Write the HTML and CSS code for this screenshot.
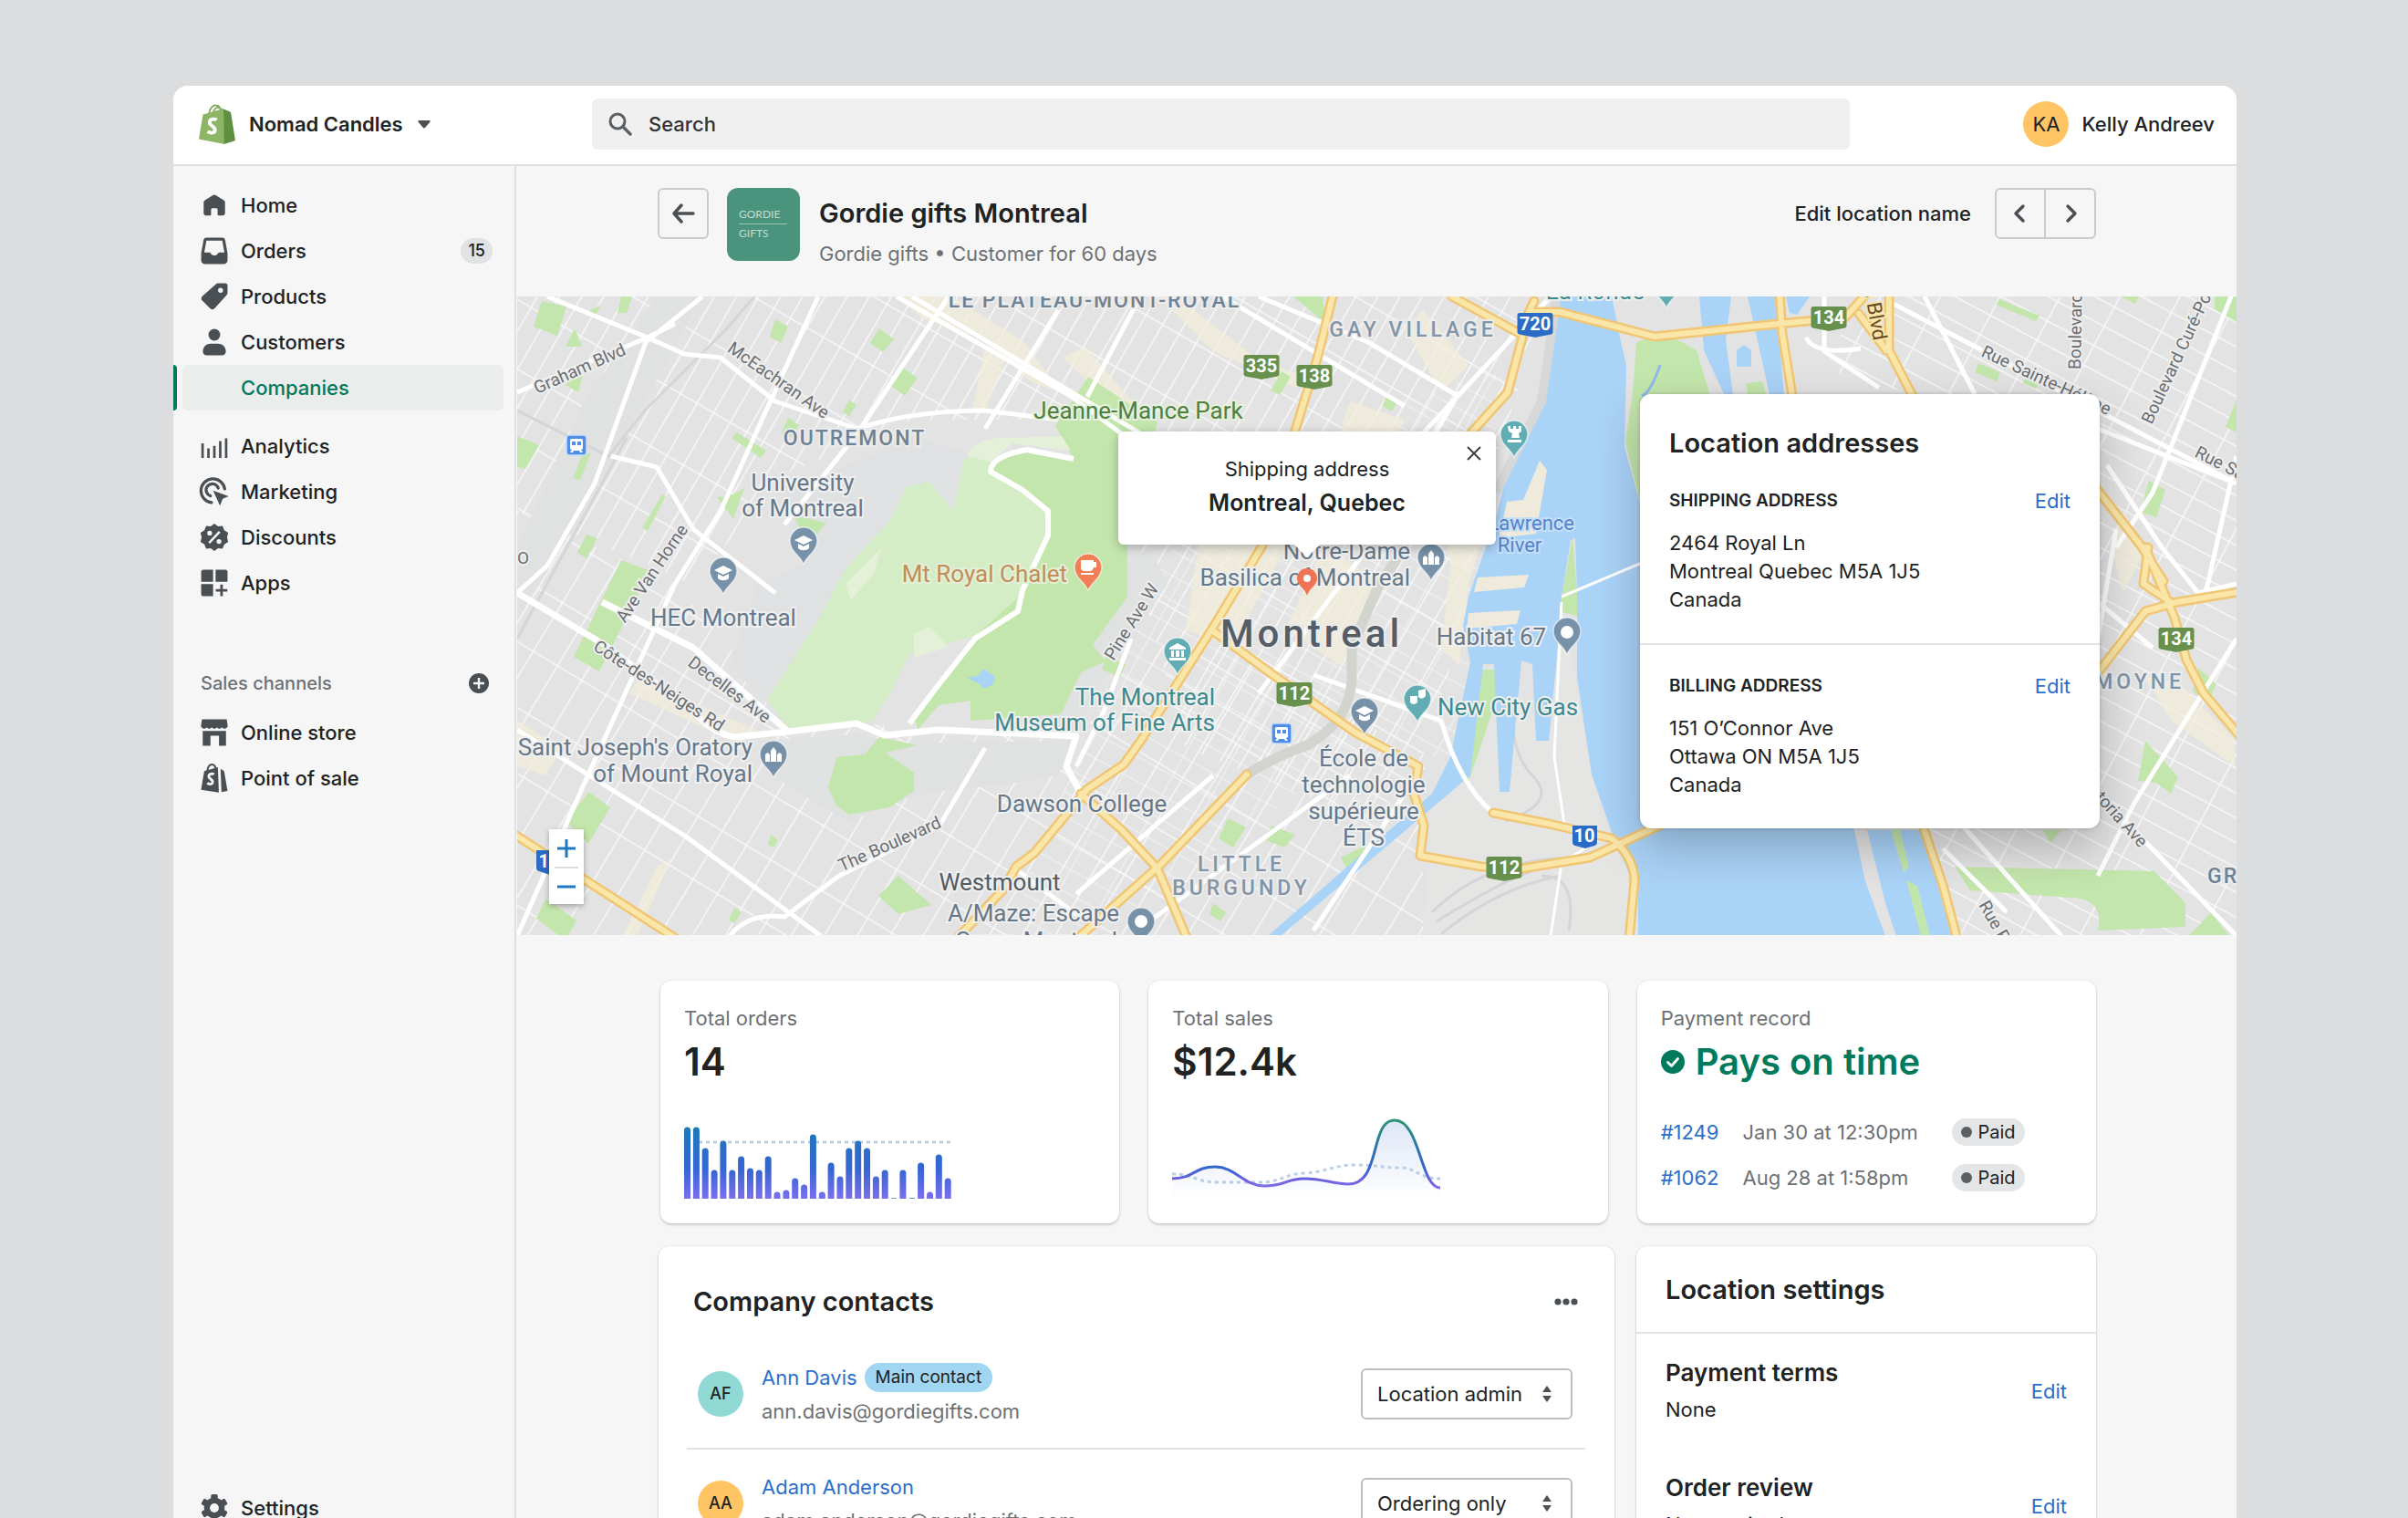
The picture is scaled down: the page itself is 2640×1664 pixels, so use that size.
FILE: index.html
```html
<!DOCTYPE html>
<html lang="en">
<head>
<meta charset="utf-8">
<meta name="viewport" content="width=device-width, initial-scale=1">
<title>Gordie gifts Montreal</title>
<link rel="stylesheet" href="styles.css">
</head>
<body>
<div class="app">
  <header class="topbar">
    <button class="store" type="button">
      <svg class="store-logo" viewBox="0 0 40 44" aria-hidden="true">
        <path d="M11 11C12 4 16 1 19 1.500c4 .5 5 5 5 8M16 10c0-4 3-7 6-6s4 3 4 6" fill="none" stroke="#7fa85a" stroke-width="1.800"/>
        <path d="M4.500 11.500 27 5l1 39L0 38.500z" fill="#8db566"/>
        <path d="M27 5.500 33 8l2 1 5 31-12.500 4z" fill="#5f8f41"/>
        <path d="M19.500 17.500c-1.500-1.200-7.500-1.800-7.800 2.700-.2 4 6.300 4 6 8.300-.3 4-5.500 3.600-8 1.500" fill="none" stroke="#fff" stroke-width="3.800"/>
      </svg>
      <span>Nomad Candles</span>
      <svg class="caret" viewBox="0 0 12 8" aria-hidden="true"><path d="M1 0h10a1 1 0 0 1 .7 1.500L6.700 7.300a1 1 0 0 1-1.400 0L.3 1.500A1 1 0 0 1 1 0z" fill="#4a4f53"/></svg>
    </button>
    <label class="search">
      <svg class="search-icon" viewBox="0 0 26 26" aria-hidden="true"><circle cx="10" cy="10" r="8" fill="none" stroke="#5c5f62" stroke-width="3"/><path d="m16 16 8 8" stroke="#5c5f62" stroke-width="3.400" stroke-linecap="round"/></svg>
      <input type="search" placeholder="Search" aria-label="Search">
    </label>
    <button class="user" type="button"><span class="avatar avatar-sun">KA</span><span>Kelly Andreev</span></button>
  </header>

  <div class="body">
    <nav class="sidebar" aria-label="Main">
      <ul class="nav">
        <li><a href="#home"><svg class="icon" viewBox="0 0 20 20"><path d="M10 3.300c.3 0 .6.1.9.3l5.200 3.200c.5.3.8.8.8 1.400v6.900c0 .9-.7 1.500-1.500 1.500h-2.600c-.4 0-.7-.3-.7-.7v-3c0-.6-.4-1-1-1H8.900c-.6 0-1 .4-1 1v3c0 .4-.3.7-.7.7H4.600c-.9 0-1.500-.7-1.500-1.500V8.200c0-.6.3-1.100.8-1.400l5.200-3.200c.3-.2.6-.3.900-.3z"/></svg>Home</a></li>
        <li><a href="#orders"><svg class="icon" viewBox="0 0 20 20"><path fill-rule="evenodd" d="M5 1.500h10a2 2 0 0 1 2 1.700l1.500 8.300V16a2.500 2.500 0 0 1-2.500 2.500H4A2.500 2.500 0 0 1 1.500 16v-4.500L3 3.200a2 2 0 0 1 2-1.700zM4.900 3.400 3.500 11h3c.6 0 1 .3 1.300.8.5.8 1.300 1.200 2.200 1.200s1.700-.4 2.200-1.200c.3-.5.7-.8 1.300-.8h3l-1.400-7.600z"/></svg>Orders<span class="count">15</span></a></li>
        <li><a href="#products"><svg class="icon" viewBox="0 0 20 20"><path fill-rule="evenodd" d="M11 2c.4-.4.900-.5 1.400-.5H17c.9 0 1.500.7 1.500 1.500v4.700c0 .5-.2 1-.6 1.400l-7.700 8.600c-.7.800-2 .8-2.800.1l-5.200-5.200c-.8-.8-.8-2 0-2.800zM14 4.400a1.600 1.600 0 1 0 0 3.200 1.600 1.600 0 0 0 0-3.200z"/></svg>Products</a></li>
        <li><a href="#customers"><svg class="icon" viewBox="0 0 20 20"><circle cx="10" cy="5.300" r="3.800"/><path d="M2.600 16c0-3 2.400-5 5-5h4.800c2.600 0 5 2 5 5 0 1.400-1 2.500-2.400 2.500H5c-1.400 0-2.400-1.100-2.400-2.500z"/></svg>Customers</a></li>
        <li><a class="current" href="#companies" aria-current="page">Companies</a></li>
      </ul>
      <ul class="nav">
        <li><a href="#analytics"><svg class="icon" viewBox="0 0 20 20"><path d="M1.600 8.300h1.600v9.400H1.600zM5.400 11.500H7v6.200H5.400zM9.200 9.800h1.600v7.900H9.200zM13 6.800h1.600v10.900H13zM16.800 5h1.600v12.700h-1.600z"/></svg>Analytics</a></li>
        <li><a href="#marketing"><svg class="icon" viewBox="0 0 20 20"><g fill="none" stroke="#4a4f53" stroke-width="1.900" stroke-linecap="round"><path d="M8.200 17A7.700 7.700 0 1 1 16.700 8.200"/><path d="M7.500 12.700a4 4 0 1 1 5-5"/></g><path d="m9.200 9.300 10 3.700-3.800 1.600L13.600 19z"/></svg>Marketing</a></li>
        <li><a href="#discounts"><svg class="icon" viewBox="0 0 20 20"><path d="m10 1.200 2.400 1.700 2.900-.2 1.100 2.700 2.500 1.600L18.200 10l.7 3-2.500 1.600-1.100 2.700-2.900-.2L10 18.800l-2.400-1.700-2.900.2-1.100-2.700L1.100 13l.7-3-.7-3 2.500-1.600 1.100-2.700 2.900.2z"/><g stroke="#f6f6f7" stroke-width="1.500" fill="none"><path d="m6.600 13.600 6.800-7.200"/><circle cx="7" cy="7.300" r=".8"/><circle cx="13" cy="12.700" r=".8"/></g></svg>Discounts</a></li>
        <li><a href="#apps"><svg class="icon" viewBox="0 0 20 20"><path d="M3 1.500h6.200v7.700H1.500V3A1.500 1.500 0 0 1 3 1.500zM10.800 1.500H17A1.500 1.500 0 0 1 18.500 3v6.200h-7.700zM1.500 10.800h7.700v7.700H3A1.500 1.500 0 0 1 1.500 17zM13.800 11h1.700v2.900h2.900v1.700h-2.900v2.900h-1.700v-2.900h-2.900v-1.700h2.900z"/></svg>Apps</a></li>
      </ul>
      <div class="nav-title">
        <h2>Sales channels</h2>
        <button class="plain" type="button" aria-label="Add sales channel"><svg class="add-icon" viewBox="0 0 22 22"><circle cx="11" cy="11" r="11" fill="#4a4f53"/><path d="M11 5v12M5 11h12" stroke="#f6f6f7" stroke-width="2.400"/></svg></button>
      </div>
      <ul class="nav">
        <li><a href="#store"><svg class="icon" viewBox="0 0 20 20"><path d="M2 1.500h16l.6 4.300c0 1-1 1.700-1.900 1.700-.8 0-1.400-.4-1.700-.9-.3.500-1 .9-1.700.9s-1.300-.4-1.600-.9c-.3.500-1 .9-1.700.9s-1.400-.4-1.700-.9c-.3.500-.9.900-1.600.9S5.300 7.100 5 6.600c-.3.500-.9.900-1.700.9-.9 0-1.900-.7-1.900-1.700z"/><path d="M2.500 9h15v9.500H13V12H7.500v6.500h-5z"/></svg>Online store</a></li>
        <li><a href="#pos"><svg class="icon" viewBox="0 0 20 20"><path d="M3.500 5.500 12.300 3l.6 16.300L1.400 17.500z"/><path d="M5.500 5.500C5.800 2.800 7 1.200 8.500 1.200S11 3 11 4.500" fill="none" stroke="#4a4f53" stroke-width="1.200"/><path d="m14 4 2.300 1.500 2.200 12.700-3.900.8z"/><path d="M9.800 7.600c-.8-.6-3.300-.7-3.400 1.200-.1 1.800 2.600 1.800 2.500 3.700-.1 1.800-2.400 1.600-3.500.7" fill="none" stroke="#f6f6f7" stroke-width="1.700"/></svg>Point of sale</a></li>
      </ul>
      <ul class="nav nav-bottom">
        <li><a href="#settings"><svg class="icon" viewBox="0 0 20 20"><g><rect x="7.800" y="1.200" width="4.400" height="17.600" rx="1"/><rect x="7.800" y="1.200" width="4.400" height="17.600" rx="1" transform="rotate(60 10 10)"/><rect x="7.800" y="1.200" width="4.400" height="17.600" rx="1" transform="rotate(120 10 10)"/><circle cx="10" cy="10" r="6.600"/></g><circle cx="10" cy="10" r="2.900" fill="#f6f6f7"/></svg>Settings</a></li>
      </ul>
    </nav>

    <main class="main">
      <div class="page-head">
        <button class="icon-button" type="button" aria-label="Back"><svg viewBox="0 0 26 22"><path d="M11 2 3 11l8 9M3 11h21" fill="none" stroke="#4a4f53" stroke-width="3.400" stroke-linecap="round" stroke-linejoin="round"/></svg></button>
        <div class="brand"><span>GORDIE</span><span>GIFTS</span></div>
        <div class="page-title">
          <h1>Gordie gifts Montreal</h1>
          <p>Gordie gifts • Customer for 60 days</p>
        </div>
        <button class="plain edit-name" type="button">Edit location name</button>
        <div class="pager">
          <button class="icon-button" type="button" aria-label="Previous"><svg viewBox="0 0 26 22"><path d="m16 3-8 8 8 8" fill="none" stroke="#4a4f53" stroke-width="3.400" stroke-linecap="round" stroke-linejoin="round"/></svg></button>
          <button class="icon-button" type="button" aria-label="Next"><svg viewBox="0 0 26 22"><path d="m10 3 8 8-8 8" fill="none" stroke="#4a4f53" stroke-width="3.400" stroke-linecap="round" stroke-linejoin="round"/></svg></button>
        </div>
      </div>

      <section class="map" aria-label="Map of Montreal">
        <svg class="map-canvas" viewBox="567 325 1885 700" preserveAspectRatio="xMidYMid slice">
          <defs>
            <pattern id="gridPlateau" width="21" height="66" patternUnits="userSpaceOnUse" patternTransform="rotate(30)"><path d="M0 0H21M0 0V66" stroke="#f8f8f8" stroke-width="3" fill="none"/></pattern>
            <pattern id="gridWest" width="31" height="62" patternUnits="userSpaceOnUse" patternTransform="rotate(31)"><path d="M0 0H31M0 0V62" stroke="#f8f8f8" stroke-width="3" fill="none"/></pattern>
            <pattern id="gridTown" width="48" height="24" patternUnits="userSpaceOnUse" patternTransform="rotate(29)"><path d="M0 0H48M0 0V24" stroke="#fff" stroke-width="3" fill="none"/></pattern>
            <pattern id="gridSouth" width="58" height="24" patternUnits="userSpaceOnUse" patternTransform="rotate(28)"><path d="M0 0H58M0 0V24" stroke="#f8f8f8" stroke-width="3" fill="none"/></pattern>
            <g id="pin"><path d="M0 0C-2-9-15-14-15-26a15 15 0 0 1 30 0C15-14 2-9 0 0z"/></g>
            <g id="cap" fill="#fff"><path d="m0-34 10 5-10 5-10-5z"/><path d="M-6-25v5c3 3 9 3 12 0v-5l-6 3z"/></g>
            <g id="towers" fill="#fff"><path d="M-9-20v-8l2.500-2 2.500 2v8zM-3-20v-12l3-4 3 4v12zM4-20v-8l2.500-2 2.500 2v8z"/></g>
            <g id="train"><rect x="-11" y="-11" width="22" height="22" rx="3" fill="#4f8fe8" stroke="#cfe0f8" stroke-width="1.500"/><path fill="#fff" fill-rule="evenodd" d="M-5-7H5q2 0 2 2V3q0 2-2 2l2 3H4L3 6h-6l-1 2h-3l2-3q-2 0-2-2V-5q0-2 2-2zm0 3v4h4v-4zm6 0v4h4v-4z"/></g>
            <path id="shield" d="M-17-13h34q2.500 0 2.500 2.500V8q0 2-2 2.500L2 13.500q-2 .5-4 0L-17.500 10.500q-2-.5-2-2.500v-18.500q0-2.500 2.500-2.500z"/>
          </defs>

          <!-- land and street grids -->
          <rect x="567" y="325" width="1885" height="700" fill="#e3e3e3"/>
          <path d="M567 325H1700L1640 500 1600 700 1550 860 1500 900 1300 820 1240 600 1280 470 1180 460 1000 460 860 520 760 640 567 560z" fill="url(#gridPlateau)"/>
          <path d="M567 560 740 640 860 780 1000 800 1190 800 1240 720 1330 690 1500 790 1560 860 1560 1026H567z" fill="url(#gridWest)"/>
          <path d="M1260 640 1330 540 1640 400 1640 640 1610 730 1600 830 1480 830 1200 1026H1100z" fill="url(#gridTown)" opacity=".4"/>
          <path d="M1985 400 2060 325H2452V1026H2150L2108 910 2095 432z" fill="url(#gridSouth)"/>
          <path d="M860 540 1000 480 1080 500 1050 560 980 600 900 690 850 780 800 730 830 640 880 620z" fill="#e0e1e3"/>
          <path d="M720 325H770L640 560 567 680V600L640 440zM1200 640 1260 600 1280 640 1200 760 1180 800 1130 800zM840 812 940 805 990 815 1180 812 1160 850 1100 860 1010 870 930 900 860 860z" fill="#e0e1e1"/>
          <path d="M1570 870 1640 728 1700 812 1712 660 1745 849 1768 915 1790 970V1026H1560z" fill="#e5e6e4"/>
          <g fill="none" stroke="#d3d5d8" stroke-width="3"><path d="M1570 1000q60-60 160-60M1575 1010q80-50 120-60M1580 1024q60-50 130-64M1690 960q40 0 30 60M1660 740q-10 80 20 110t-30 50"/><path d="M567 450q60 30 100 50l40-50 90-90 30-35M567 700l120-220"/></g>

          <!-- commercial strips -->
          <g fill="#f2eedb" opacity=".75"><path d="M983 325h60l80 50 40 55-30-10-60-50-60-20zM1080 380l24 10-24 60h-14zM1190 380l60 70-14 12-70-70zM1290 325l90 70 60 20-20 10-90-40-60-60zM1560 340l50 60-30 30-40-70zM1320 560l90 40-60 110-50-20zM1450 600l70 40-50 90-60-40zM1580 520l60 20-30 100-10 90-20-20 10-90zM1480 440l60 20-30 60-50-20z"/><path d="M700 745 830 800 810 815 690 760zM567 790l50 30-20 30-30-10zM720 950l16-8-40 90h-16zM2330 560l18 50-20 40-14-50zM2350 740l40 10 60 60v30l-70-50z"/></g>

          <!-- parks -->
          <g fill="#c3e6ac"><path d="m594 330 27 6-10 32-26-10zM620 380l10-20 8 20zM681 325h12l-6 18h-10zM646 340l12-5-7 16zM850 350l14 8-8 18-12-7zM964 360l16 12-12 14-14-10zM988 402l18 12-14 20-16-12zM931 438l8 6-8 12-7-4zM864 458l12 8-8 14-11-6zM808 474l32 20-6 8-32-22zM567 478l24 10-15 26-9-2zM638 500l10-4-12 30-8-2zM726 542l4 2-20 38-6-3zM643 586l12 4-12 22-10-6zM681 614l32 12-56 110-28-16zM645 868l24 17-24 40-24-24zM598 985l34 24-12 22-32-24zM628 400l12 8-6 22-14-8zM786 545q16 0 30-10l-12 34zM870 565l36 8-20 24z"/><path d="M1086 517 1101 497 1135 492 1177 503 1157 467 1193 413 1269 463 1264 480 1300 500 1290 560 1225 585 1236 598V654L1198 707 1212 725 1185 737 1163 783 1064 790 1064 768 1029 773 1006 800 1002 783 1029 753 1069 697 1087 672 1060 600 1060 540z"/><path d="m964 808 42 9-35 8 31 22v20l-27 18-44 8-14-10-9-20 9-33 31-3zM985 960l36 32-36 10-22-20zM845 915l8 6-5 8-6-3zM805 995l8 5-8 12-6-4zM1212 720l22 8-6 14-20-8zM1405 407l10 6-12 20-10-5zM1520 433l12 8-6 10-10-6zM1418 325h32l4 30zM1346 897l20 10-14 22-16-10zM1394 905l26 10-12 14-20-8zM1330 990l14 10-6 10-12-8zM1470 940l60-30-50 50z"/><path d="M1614 735l38-2-44 130-8-20zM1724 589l5 60v26l-20-5z"/><path d="M1794 376 1820 362 1860 384 1877 440 1800 560 1782 484 1790 430zM2192 328l44 18-4 6-44-18zM2169 398l24 10-4 10-24-10zM2220 412l16 6-4 8-14-6zM2325 325h20l-4 8zM2428 325h24v28l-24-14zM2440 468l12-30v36zM2356 527l18 10-10 30-18-6zM2352 812l36 40-8 18-16-12-20-2zM2410 732l20 18-10 20-16-12zM2240 910h20l-12 14z"/><path d="M2143 950 2362 955 2396 990V1016L2300 1020Q2308 985 2270 984L2160 976zM2400 1026l24-26 20 26z"/></g>
          <path d="M1057 502 1086 500 1086 517 1121 537 1149 560V587L1121 647 1122 650 1069 697 997 717 977 758 957 790 939 795 864 798 841 767 897 680 927 623 976 570 994 533 1019 528 1045 560z" fill="#d4edc6"/>
          <path d="m1002 695 16-8 22 22-38 12zM927 640l40-40-10 30-24 28zM1060 500q10-22 50-20l54-2 10 16-64-8-24 20z" fill="#e5f0d8"/>
          <path d="m1060 743 12-2 6-8 13 9-2 8-11 5-4-5z" fill="#aad3f8"/>

          <!-- river, canal and docks -->
          <g fill="#aad3f8">
            <path d="M1706 325H1767L1776 370 1783 400 1781 490 1800 560 1900 700 2033 910H2108L2148 1026H1796V980L1768 915 1745 849 1729 742V649L1727 590 1722 592 1712 654 1706 730 1698 812H1684L1680 728 1668 724 1655 868H1644L1638 728H1626L1612 850 1404 1026H1390L1500 930 1570 870 1590 830 1612 726 1604 686 1610 654 1641 565 1655 505 1686 454 1700 381z"/>
            <path d="M1863 325H1946L1956 432H1890L1868 384zM1958 325h26l-14 20-8-2z"/>
          </g>
          <path d="M1898 325h18l24 107h-40l-8-60z" fill="#e3e3e3"/><path d="m1904 384 8-6 8 6v18h-16z" fill="#aad3f8"/><path d="m1914 420 18-2 4 14h-20z" fill="#c3e6ac"/>
          <path d="M2033 910h14l20 80 12 36h-12l-22-60z" fill="#e3e3e3"/><path d="M2073 910h10l10 40-6 6zM2090 965l12 6 14 55h-10z" fill="#c3e6ac"/>
          <path d="m1688 505 8 10-12 70-41 5 9-40 18-2zM1620 633l56-3-5 14-55 5zM1610 672l57-3-4 15-55 5z" fill="#efeadb"/>
          <path d="M1820 400q-10 30-20 34" stroke="#8fb9ea" stroke-width="3" fill="none"/>

          <!-- main white streets -->
          <g fill="none" stroke="#fff" stroke-width="5" stroke-linejoin="round">
            <path d="M600 325 710 370 750 388 790 392 850 440 940 470M770 325 708 375 652 530 600 620 567 650M663 707 567 650M567 430 710 370 740 355M897 325 840 450 790 560 740 640M983 325 1172 433 1290 520M940 470Q1000 450 1080 450L1160 460M670 500 720 512 760 580 850 650M1040 325l-100 150-80 100M1160 340l-80 130M1250 325l-58 110M1340 325l200 120M567 800 752 917 900 1026M740 640 640 860 567 1026M1000 325l300 180M1380 325l120 50 100 60"/>
            <path d="M1177 503 1126 493Q1086 500 1086 517L1121 537 1149 560V587L1121 647 1116 670 1069 700 1024 757 997 793" stroke-width="6"/>
            <path d="M567 650 663 707 760 780Q790 812 814 807L864 802 939 793 970 806 1029 800 1180 807 1169 840 1185 870M660 660 760 710 864 802" stroke-width="7"/>
            <path d="M800 1026Q820 1000 860 1005L920 960 1030 905 1080 820M1440 740 1580 790Q1600 860 1637 891M1110 950l80 60M1240 700l-30 80-30 60M1330 850l-150 130M1480 850l-220 160M1560 840l-120 180M1500 600l-120 160M1600 430 1500 600M1700 325l-140 150" />
            <path d="M1712 654 1800 617M1712 660l-8 170 12 80M1700 1026l12-80 40-25" stroke-width="3"/>
            <path d="M2000 325v60l60 40M2070 330l382 200M2110 325 2165 432M1980 370q10 20 60 12M2452 310 2360 540 2320 600M2300 470l152 60M2310 510l60 90 40 50 42-10M2300 700l20-120M2452 700 2340 880 2300 960M2330 900 2452 1026M2120 870l140 156M2200 1000l-70-70M2300 660l60 50M2452 500l-36 160"/>
          </g>

          <!-- tunnel -->
          <path d="M1367 849Q1400 828 1433 817 1480 790 1482 745V710L1510 645 1540 600" fill="none" stroke="#d2d5ce" stroke-width="11"/>
          <path d="M1706 330 1690 440 1640 540" fill="none" stroke="#d6d8d8" stroke-width="10"/>

          <!-- highways: casing, then fill -->
          <defs><path id="highways" fill="none" stroke-linejoin="round" stroke-linecap="round" d="M1461 325 1445 390 1420 472 1384 598 1331 686 1252 810 1232 838 1192 865 1134 935 1114 950 1100 975 1048 1030M1329 691 1396 740 1486 803 1555 840 1550 870 1561 905 1557 938 1624 950 1669 952 1743 940 1830 900M1180 1030 1273 947 1367 849M560 912 740 1028M1185 870 1230 910 1269 952 1302 1030M1592 325 1665 365 1682 330M1682 342 1710 342 1814 369 1949 355 2023 348 2048 320M1669 370 1653 430 1608 480M1951 320 1954 366 1966 440M2071 320V384L2100 440M2038 344 2068 384M2108 905 2130 970 2146 1030M2298 535 2347 598 2372 637M2352 600 2384 677 2397 723 2416 760 2460 812M2298 740 2352 670 2387 660 2460 648M2355 600 2350 640 2380 660M1637 891 1698 903 1767 919Q1792 940 1792 966L1786 1030"/></defs>
          <use href="#highways" stroke="#f0c674" stroke-width="11"/>
          <use href="#highways" stroke="#fae6a8" stroke-width="6"/>

          <!-- street names -->
          <g class="street">
            <text text-anchor="middle" transform="translate(638 410) rotate(-24)">Graham Blvd</text>
            <text text-anchor="middle" transform="translate(850 422) rotate(35)">McEachran Ave</text>
            <text text-anchor="middle" transform="translate(720 632) rotate(-56)">Ave Van Horne</text>
            <text text-anchor="middle" transform="translate(719 757) rotate(33)">Côte-des-Neiges Rd</text>
            <text text-anchor="middle" transform="translate(796 761) rotate(37)">Decelles Ave</text>
            <text text-anchor="middle" transform="translate(978 931) rotate(-24)">The Boulevard</text>
            <text text-anchor="middle" transform="translate(1246 685) rotate(-58)">Pine Ave W</text>
            <text transform="translate(2171 390) rotate(25)">Rue Sainte-Hélène</text>
            <text transform="translate(2281 405) rotate(-89)">Boulevard Ste</text>
            <text transform="translate(2359 466) rotate(-65)">Boulevard Curé-Poirier</text>
            <text transform="translate(2405 500) rotate(27)">Rue Saint</text>
            <text text-anchor="end" transform="translate(2346 930) rotate(48)">Victoria Ave</text>
            <text transform="translate(2169 992) rotate(60)">Rue Riverside</text>
            <text transform="translate(567 618)">O</text>
            <text class="brown" text-anchor="end" transform="translate(2054 374) rotate(80)">Taschereau Blvd</text>
          </g>

          <!-- districts -->
          <g class="district" text-anchor="middle">
            <text x="1200" y="337">LE PLATEAU-MONT-ROYAL</text>
            <text x="937" y="488">OUTREMONT</text>
          </g>
          <g class="district wide" text-anchor="middle">
            <text x="1549" y="369">GAY VILLAGE</text>
            <text x="1361" y="955">LITTLE</text>
            <text x="1361" y="981">BURGUNDY</text>
          </g>
          <g class="district wide"><text x="2395" y="755" text-anchor="end">LEMOYNE</text></g>
          <g class="district"><text x="2420" y="968">GREENFIELD</text></g>
          <text class="city" x="1438" y="709" text-anchor="middle">Montreal</text>

          <!-- places -->
          <g class="place">
            <g text-anchor="middle">
              <text x="880" y="538">University</text><text x="880" y="566">of Montreal</text>
              <text x="793" y="686">HEC Montreal</text>
              <text x="1186" y="890">Dawson College</text>
              <text class="dark" x="1096" y="976">Westmount</text>
              <text x="1133" y="1010">A/Maze: Escape</text><text x="1136" y="1040">Game Montreal</text>
              <text x="1635" y="707">Habitat 67</text>
              <text x="1495" y="840">École de</text><text x="1495" y="869">technologie</text><text x="1495" y="898">supérieure</text><text x="1495" y="927">ÉTS</text>
              <text class="park" x="1248" y="459">Jeanne-Mance Park</text>
              <text class="river" x="1666" y="605">River</text>
            </g>
            <g text-anchor="end">
              <text x="825" y="828">Saint Joseph's Oratory</text><text x="825" y="857">of Mount Royal</text>
              <text class="food" x="1170" y="638">Mt Royal Chalet</text>
              <text class="teal" x="1332" y="773">The Montreal</text><text class="teal" x="1332" y="801">Museum of Fine Arts</text>
              <text x="1546" y="613">Notre-Dame</text><text x="1546" y="642">Basilica of Montreal</text>
              <text class="river" x="1726" y="581">St Lawrence</text>
              <text class="teal" x="1803" y="328">La Ronde</text>
            </g>
            <text class="teal" x="1576" y="784">New City Gas</text>
          </g>

          <!-- pins -->
          <g stroke="#fff" stroke-opacity=".6" stroke-width="1.500">
            <g fill="#7691a8"><use href="#pin" x="881" y="619"/><use href="#pin" x="793" y="652"/><use href="#pin" x="848" y="853"/><use href="#pin" x="1569" y="637"/><use href="#pin" x="1718" y="718"/><use href="#pin" x="1496" y="806"/><use href="#pin" x="1251" y="1036"/></g>
            <g fill="#62adb3"><use href="#pin" x="1291" y="740"/><use href="#pin" x="1660" y="502"/><use href="#pin" x="1554" y="792"/><use href="#pin" x="1827" y="338"/></g>
            <g fill="#f07f55"><use href="#pin" x="1193" y="648"/></g>
          </g>
          <use href="#cap" x="881" y="621"/><use href="#cap" x="793" y="654"/><use href="#cap" x="1496" y="808"/>
          <use href="#towers" x="848" y="855"/><use href="#towers" x="1569" y="639"/>
          <g fill="#fff"><circle cx="1718" cy="693" r="7"/><circle cx="1251" cy="1010" r="7"/>
            <path d="m1291 705 9 5v2h-18v-2zM1284 713h3v7h-3zm5 0h4v7h-4zm6 0h3v7h-3zM1282 721h18v3h-18z"/>
            <path d="M1653 467h3v3h3v-3h3v3h3v-3h3v6l-3 2 1 5h-9l1-5-4-2zM1653 482h15v3h-15z"/>
            <path d="M1546 763h8v7q-4 4-8 0zM1555 757l8-2v8q-4 5-8 1z"/>
            <path d="M1185 614h14v2h3v6h-3q-1 4-4 4h-6q-4 0-4-4zM1185 628h14v2h-14z"/></g>
          <use href="#train" x="632" y="488"/><use href="#train" x="1405" y="804"/>

          <!-- road shields -->
          <g fill="#67904c"><use href="#shield" x="1383" y="402"/><use href="#shield" x="1441" y="413"/><use href="#shield" x="1419" y="761"/><use href="#shield" x="1649" y="952"/><use href="#shield" x="2005" y="349"/><use href="#shield" x="2386" y="701"/></g>
          <g fill="#2b6bc6"><use href="#shield" x="1683" y="356"/><path d="M1724 905h27v18q0 3-3 4l-10 3-11-3q-3-1-3-4zM588 932h30v22l-15 5-12-4q-3-1-3-4z"/></g>
          <g class="shield" text-anchor="middle">
            <text x="1383" y="408">335</text><text x="1441" y="419">138</text><text x="1419" y="767">112</text><text x="1649" y="958">112</text><text x="2005" y="355">134</text><text x="2386" y="707">134</text><text x="1683" y="362">720</text><text x="1737" y="923">10</text><text x="602" y="951">15</text>
          </g>
          <g><path d="M1433 653C1431 645 1422 642 1422 634a11 11 0 0 1 22 0c0 8-9 11-11 19z" fill="#ee7455"/><circle cx="1433" cy="634" r="4" fill="#fff"/></g>
        </svg>

        <div class="zoom">
          <button type="button" aria-label="Zoom in"><svg viewBox="0 0 20 20"><path d="M10 0v20M0 10h20" stroke="#1f78c1" stroke-width="3"/></svg></button>
          <button type="button" aria-label="Zoom out"><svg viewBox="0 0 20 20"><path d="M0 10h20" stroke="#1f78c1" stroke-width="3"/></svg></button>
        </div>

        <div class="popup" role="dialog" aria-label="Shipping address">
          <p>Shipping address</p>
          <strong>Montreal, Quebec</strong>
          <button class="popup-close" type="button" aria-label="Close"><svg viewBox="0 0 16 16"><path d="m1 1 14 14M15 1 1 15" stroke="#3c4043" stroke-width="2"/></svg></button>
        </div>

        <aside class="addresses">
          <section>
            <h2>Location addresses</h2>
            <div class="address-head"><h3>SHIPPING ADDRESS</h3><a href="#edit-shipping">Edit</a></div>
            <address>2464 Royal Ln<br>Montreal Quebec M5A 1J5<br>Canada</address>
          </section>
          <section>
            <div class="address-head"><h3>BILLING ADDRESS</h3><a href="#edit-billing">Edit</a></div>
            <address>151 O’Connor Ave<br>Ottawa ON M5A 1J5<br>Canada</address>
          </section>
        </aside>
      </section>

      <div class="content">
        <div class="stats">
          <section class="card stat">
            <h2>Total orders</h2>
            <p class="figure">14</p>
            <svg class="chart" viewBox="0 0 294 88" aria-label="Orders per day">
              <defs><linearGradient id="bars" gradientUnits="userSpaceOnUse" x1="0" y1="88" x2="0" y2="9"><stop offset="0" stop-color="#8070f0"/><stop offset=".45" stop-color="#3565d4"/><stop offset="1" stop-color="#1f78b8"/></linearGradient></defs>
              <path d="M16 26H294" stroke="#b9cfe6" stroke-width="3" stroke-dasharray="4 4"/>
              <path fill="none" stroke="url(#bars)" stroke-width="7" stroke-linecap="round" transform="translate(0 3)" d="M3.500 88V10M13.400 88V10M23.200 88V33M33.100 88V57M42.900 88V25M52.800 88V57M62.600 88V42M72.500 88V55M82.300 88V57M92.200 88V42M102 88V81M111.900 88V79M121.700 88V66M131.600 88V73M141.400 88V18M151.300 88V81M161.100 88V49M171 88V64M180.800 88V33M190.700 88V25M200.500 88V33M210.400 88V64M220.200 88V57M239.900 88V57M259.600 88V49M269.500 88V81M279.300 88V40M289.200 88V66"/>
              <path d="M227 87.500h6M247 87.500h6" stroke="#5f9fcb"/>
            </svg>
          </section>
          <section class="card stat">
            <h2>Total sales</h2>
            <p class="figure">$12.4k</p>
            <svg class="chart" viewBox="0 0 294 88" aria-label="Sales over time">
              <defs>
                <linearGradient id="line" gradientUnits="userSpaceOnUse" x1="0" y1="2" x2="0" y2="80"><stop offset="0" stop-color="#2c9474"/><stop offset=".3" stop-color="#2c7aa0"/><stop offset=".65" stop-color="#2f66cc"/><stop offset=".85" stop-color="#6f60e0"/><stop offset="1" stop-color="#8a78f5"/></linearGradient>
                <linearGradient id="area" x1="0" y1="0" x2="0" y2="1"><stop offset="0" stop-color="#dde5f6"/><stop offset="1" stop-color="#fff"/></linearGradient>
              </defs>
              <path d="M0 66C24 66 24 53 47 53S78 74 101 74 125 66 145 66 178 72 193 72C230 72 216 2 244 2S272 76 294 76V88H0z" fill="url(#area)"/>
              <path d="M0 61C25 61 25 70 50 70H95C120 70 122 61 145 60S178 51 200 51 232 54 250 54 270 66 294 66" fill="none" stroke="#b9cfe6" stroke-width="3" stroke-dasharray="4 4"/>
              <path d="M0 66C24 66 24 53 47 53S78 74 101 74 125 66 145 66 178 72 193 72C230 72 216 2 244 2S272 76 294 76" fill="none" stroke="url(#line)" stroke-width="3"/>
            </svg>
          </section>
          <section class="card stat">
            <h2>Payment record</h2>
            <p class="figure good"><svg class="check" viewBox="0 0 26 26" aria-hidden="true"><circle cx="13" cy="13" r="13" fill="#007a5c"/><path d="m7.500 13.500 4 4 7-8" fill="none" stroke="#fff" stroke-width="2.800" stroke-linecap="round" stroke-linejoin="round"/></svg>Pays on time</p>
            <table class="payments">
              <tr><td><a href="#1249">#1249</a></td><td>Jan 30 at 12:30pm</td><td><span class="paid">Paid</span></td></tr>
              <tr><td><a href="#1062">#1062</a></td><td>Aug 28 at 1:58pm</td><td><span class="paid">Paid</span></td></tr>
            </table>
          </section>
        </div>

        <div class="details">
          <section class="card contacts">
            <div class="contacts-head">
              <h2>Company contacts</h2>
              <button class="plain" type="button" aria-label="More actions"><svg class="dots" viewBox="0 0 26 8"><g fill="#4a4f53"><circle cx="4" cy="4" r="3.600"/><circle cx="13" cy="4" r="3.600"/><circle cx="22" cy="4" r="3.600"/></g></svg></button>
            </div>
            <ul class="contact-list">
              <li>
                <span class="avatar avatar-small avatar-teal">AF</span>
                <div class="who"><p><a href="#ann">Ann Davis</a><span class="tag">Main contact</span></p><p class="mail">ann.davis@gordiegifts.com</p></div>
                <span class="picker"><select aria-label="Role of Ann Davis"><option>Location admin</option><option>Ordering only</option></select><svg viewBox="0 0 12 20" aria-hidden="true"><path d="m6 1 5 7H1zM6 19l5-7H1z" fill="#4a4f53"/></svg></span>
              </li>
              <li>
                <span class="avatar avatar-small avatar-sun">AA</span>
                <div class="who"><p><a href="#adam">Adam Anderson</a></p><p class="mail">adam.anderson@gordiegifts.com</p></div>
                <span class="picker"><select aria-label="Role of Adam Anderson"><option>Ordering only</option><option>Location admin</option></select><svg viewBox="0 0 12 20" aria-hidden="true"><path d="m6 1 5 7H1zM6 19l5-7H1z" fill="#4a4f53"/></svg></span>
              </li>
            </ul>
          </section>
          <section class="card settings">
            <h2>Location settings</h2>
            <div class="setting"><div><h3>Payment terms</h3><p>None</p></div><a href="#edit-terms">Edit</a></div>
            <div class="setting"><div><h3>Order review</h3><p>Not required</p></div><a href="#edit-review">Edit</a></div>
          </section>
        </div>
      </div>
    </main>
  </div>
</div>
</body>
</html>
```
FILE: styles.css
```css
* { box-sizing: border-box; margin: 0; padding: 0; }
html, body { height: 100%; }
body {
  padding: 94px 188px 0 190px;
  overflow: hidden;
  background: #dcddde;
  color: #202223;
  font: 400 22px/32px Inter, "Liberation Sans", sans-serif;
}
ul { list-style: none; }
a { color: #2c6ecb; text-decoration: none; }
button, input, select { font: inherit; color: inherit; }
button { background: none; border: 0; cursor: pointer; }
address { font-style: normal; line-height: 31px; }

.app {
  display: flex;
  flex-direction: column;
  height: calc(100vh - 80px);
  border-radius: 16px 16px 0 0;
  overflow: hidden;
  background: #f6f6f7;
}

/* top bar */
.topbar {
  display: flex;
  align-items: center;
  flex: none;
  height: 88px;
  padding: 0 24px 2px 28px;
  background: #fff;
  border-bottom: 2px solid #dfe0e1;
  font-weight: 500;
}
.store { display: flex; align-items: center; width: 431px; text-align: left; font-weight: 600; }
.store-logo { width: 40px; height: 44px; margin-right: 15px; }
.caret { width: 14px; height: 9px; margin-left: 16px; }
.search {
  display: flex;
  align-items: center;
  flex: 1;
  max-width: 1379px;
  height: 56px;
  padding: 0 18px;
  gap: 18px;
  border-radius: 6px;
  background: #f0f0f0;
}
.search-icon { width: 26px; height: 26px; }
.search input { flex: 1; border: 0; background: none; outline: 0; }
.search input::placeholder { color: #303335; opacity: 1; }
.user { display: flex; align-items: center; gap: 14px; margin-left: auto; }
.avatar {
  display: flex;
  align-items: center;
  justify-content: center;
  flex: none;
  width: 50px;
  height: 50px;
  border-radius: 50%;
  font-weight: 400;
}
.avatar-small { font-size: 18px; font-weight: 500; }
.avatar-sun { background: #ffc463; }
.avatar-teal { background: #91d9d4; }

/* sidebar */
.body { display: flex; flex: 1; min-height: 0; }
.sidebar {
  display: flex;
  flex-direction: column;
  flex: none;
  width: 376px;
  padding: 18px 12px 0 0;
  border-right: 2px solid #dfe0e1;
  font-weight: 500;
}
.nav { margin-bottom: 14px; }
.nav a {
  position: relative;
  display: flex;
  align-items: center;
  height: 50px;
  margin-left: 10px;
  padding: 0 12px 0 18px;
  gap: 12px;
  border-radius: 6px;
  color: inherit;
}
.icon { width: 34px; height: 34px; fill: #4a4f53; }
.nav .current { padding-left: 64px; background: #ebecec; color: #007a5c; }
.current::before {
  content: "";
  position: absolute;
  left: -10px;
  top: 0;
  width: 4px;
  height: 50px;
  border-radius: 0 4px 4px 0;
  background: #007a5c;
}
.count {
  margin-left: auto;
  padding: 0 8px;
  border-radius: 14px;
  background: #e1e2e3;
  font-size: 18px;
  line-height: 28px;
}
.nav-title {
  display: flex;
  align-items: center;
  justify-content: space-between;
  height: 50px;
  margin: 46px 16px 4px 30px;
}
.nav-title h2 { color: #6d7175; font-size: 20px; font-weight: 500; }
.add-icon { display: block; width: 22px; height: 22px; }
.nav-bottom { margin-top: auto; margin-bottom: 0; }

/* page header */
.main { flex: 1; min-width: 0; overflow: hidden; }
.page-head {
  display: flex;
  align-items: flex-start;
  padding: 24px 154px 31px 155px;
}
.icon-button {
  display: flex;
  align-items: center;
  justify-content: center;
  width: 56px;
  height: 56px;
  border: 2px solid #c9cccf;
  border-radius: 6px;
}
.icon-button svg { width: 26px; height: 22px; }
.brand {
  display: flex;
  flex-direction: column;
  justify-content: center;
  width: 80px;
  height: 80px;
  margin: 0 21px 0 20px;
  padding: 0 14px 2px 13px;
  border-radius: 12px;
  background: #4a947e;
  color: #c3dcd3;
  font: 400 12px/20px Lato, sans-serif;
}
.brand span + span { border-top: 1px solid #9cc4b7; }
.page-title { flex: 1; }
h1 { font-size: 29px; font-weight: 600; line-height: 56px; }
.page-title p { color: #6d7175; line-height: 32px; }
.plain { display: block; }
.edit-name { height: 56px; margin-right: 26px; font-weight: 500; }
.pager { display: flex; }
.pager .icon-button:first-child { border-radius: 6px 0 0 6px; }
.pager .icon-button:last-child { margin-left: -2px; border-radius: 0 6px 6px 0; width: 57px; }

/* map */
.map { position: relative; height: 700px; margin-left: 1px; }
.map-canvas { display: block; width: 100%; height: 100%; font-family: Roboto, sans-serif; }
.street text { font-size: 19px; fill: #6a6e72; stroke: #ededed; stroke-width: 4px; paint-order: stroke; }
.street .brown { fill: #6b4a26; stroke: #fae6a8; font-size: 22px; }
.district text { font-size: 23px; font-weight: 500; letter-spacing: 2px; fill: #6f8294; stroke: #ececec; stroke-width: 4px; paint-order: stroke; }
.district.wide text { letter-spacing: 4px; fill: #8294a5; }
.city { font-size: 42px; font-weight: 500; letter-spacing: 4px; fill: #555e66; stroke: #ececec; stroke-width: 4px; paint-order: stroke; }
.place text { font-size: 26px; fill: #66788a; stroke: #efefef; stroke-width: 4px; paint-order: stroke; }
.place .dark { fill: #555a5f; }
.place .park { fill: #4f8040; stroke: #e6f0dd; }
.place .food { fill: #c18d58; stroke: #e2f0d6; }
.place .teal { fill: #3d8a8e; }
.place .river { fill: #5583cc; stroke: #c4def8; font-size: 22px; }
.shield text { font-size: 20px; font-weight: 700; fill: #fff; }
.zoom {
  position: absolute;
  left: 35px;
  bottom: 34px;
  width: 38px;
  padding: 0 6px;
  background: #fff;
  box-shadow: 0 2px 6px rgba(0, 0, 0, .3);
}
.zoom button { display: flex; align-items: center; justify-content: center; width: 26px; height: 41px; }
.zoom button + button { border-top: 2px solid #dcdcdc; }
.zoom svg { width: 20px; height: 20px; }
.popup {
  position: absolute;
  left: 659px;
  top: 148px;
  width: 414px;
  height: 124px;
  padding-top: 23px;
  border-radius: 6px;
  background: #fff;
  text-align: center;
  box-shadow: 0 3px 12px rgba(0, 0, 0, .28);
}
.popup p { line-height: 36px; }
.popup strong { display: block; font-size: 25px; font-weight: 600; line-height: 38px; }
.popup::after {
  content: "";
  position: absolute;
  left: 192px;
  top: 123px;
  border: 15px solid transparent;
  border-top-color: #fff;
  border-bottom: 0;
}
.popup-close { position: absolute; top: 16px; right: 16px; width: 16px; height: 16px; line-height: 0; }
.addresses {
  position: absolute;
  top: 107px;
  right: 150px;
  width: 504px;
  border-radius: 12px;
  background: #fff;
  box-shadow: 0 0 4px rgba(0, 0, 0, .2), 0 20px 50px rgba(0, 0, 0, .24);
}
.addresses section { padding: 32px; }
.addresses section + section { padding-top: 30px; border-top: 2px solid #e1e3e5; }
h2 { font-size: 29px; font-weight: 600; line-height: 44px; }
.addresses h2 { margin-bottom: 26px; }
.address-head { display: flex; align-items: center; justify-content: space-between; height: 30px; margin-bottom: 16px; }
.address-head h3 { font-size: 19px; font-weight: 600; }

/* cards */
.content { padding: 50px 154px 0 156px; }
.card {
  border-radius: 12px;
  background: #fff;
  box-shadow: 0 0 2px rgba(23, 24, 24, .15), 0 2px 3px rgba(0, 0, 0, .15);
}
.stats { display: grid; grid-template-columns: repeat(3, 1fr); gap: 32px; padding-left: 2px; }
.stat { height: 266px; padding: 26px; }
.stat h2 { color: #6d7175; font-size: 22px; font-weight: 400; line-height: 30px; }
.figure { display: flex; align-items: center; gap: 12px; margin-top: 7px; font-size: 42px; font-weight: 600; line-height: 52px; }
.good { color: #007a5c; font-size: 40px; }
.check { width: 26px; height: 26px; }
.chart { display: block; width: 294px; height: 88px; margin-top: 36px; }
.payments { margin-top: 26px; border-spacing: 0; color: #6d7175; }
.payments td { height: 50px; padding-right: 26px; }
.payments td:nth-child(2) { width: 230px; padding-right: 0; }
.paid {
  display: flex;
  align-items: center;
  gap: 6px;
  width: 80px;
  height: 30px;
  padding-left: 10px;
  border-radius: 16px;
  background: #e4e5e7;
  color: #202223;
  font-size: 20px;
}
.paid::before { content: ""; width: 12px; height: 12px; border-radius: 50%; background: #5c5f62; }

.details { display: grid; grid-template-columns: 1fr 504px; gap: 24px; margin-top: 25px; }
.contacts { padding: 39px 32px 0 31px; }
.contacts-head { display: flex; align-items: center; justify-content: space-between; padding: 0 8px 0 7px; }
.dots { display: block; width: 26px; height: 8px; }
.contact-list { margin-top: 20px; }
.contact-list li { display: flex; align-items: center; height: 120px; padding: 0 14px 0 12px; border-bottom: 2px solid #e1e3e5; }
.who { flex: 1; margin-left: 20px; }
.who p { display: flex; align-items: center; height: 37px; gap: 8px; }
.mail { color: #6d7175; }
.tag { padding: 0 12px; border-radius: 16px; background: #a0d6f1; font-size: 19px; line-height: 32px; }
.picker { position: relative; width: 232px; }
.picker select {
  display: block;
  width: 100%;
  height: 56px;
  padding: 0 16px;
  appearance: none;
  border: 2px solid #babfc3;
  border-radius: 6px;
  background: #fff;
  color: #202223;
}
.picker svg { position: absolute; right: 22px; top: 18px; width: 12px; height: 20px; pointer-events: none; }

.settings h2 { padding: 26px 32px 24px; border-bottom: 2px solid #e1e3e5; }
.setting { display: flex; align-items: center; justify-content: space-between; height: 126px; padding: 0 32px; }
.setting h3 { font-size: 26px; font-weight: 600; line-height: 40px; }
.setting p { line-height: 40px; }
```
